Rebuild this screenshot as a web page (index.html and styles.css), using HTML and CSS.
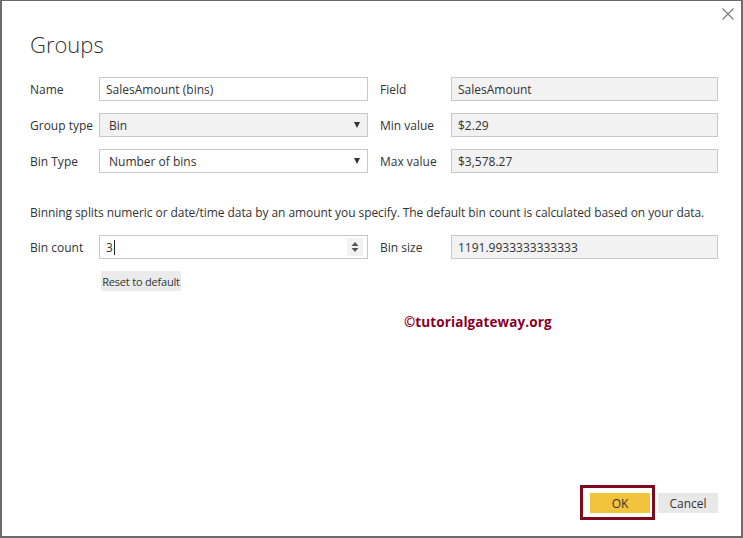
FILE: index.html
```html
<!DOCTYPE html>
<html>
<head>
<meta charset="utf-8">
<link rel="stylesheet" href="styles.css">
</head>
<body>
<div class="dialog">
  <div class="close" aria-label="Close">
    <svg width="12" height="12" viewBox="0 0 12 12"><path d="M0.5 0.5 L11.5 11.5 M11.5 0.5 L0.5 11.5" stroke="#777" stroke-width="1.1" fill="none"/></svg>
  </div>
  <h1 class="title">Groups</h1>
  <div class="grid">
    <label class="lbl">Name</label>
    <div class="box">SalesAmount (bins)</div>
    <label class="lbl lbl2">Field</label>
    <div class="box ro">SalesAmount</div>

    <label class="lbl">Group type</label>
    <div class="box ro sel">Bin<span class="caret"></span></div>
    <label class="lbl lbl2">Min value</label>
    <div class="box ro">$2.29</div>

    <label class="lbl">Bin Type</label>
    <div class="box sel">Number of bins<span class="caret"></span></div>
    <label class="lbl lbl2">Max value</label>
    <div class="box ro">$3,578.27</div>
  </div>
  <p class="desc">Binning splits numeric or date/time data by an amount you specify. The default bin count is calculated based on your data.</p>
  <div class="grid grid2">
    <label class="lbl">Bin count</label>
    <div class="box spin"><span>3</span><span class="cursor"></span><span class="spinner"><svg width="8" height="12" viewBox="0 0 8 12"><path d="M4 1 L7.5 5 L0.5 5 Z M4 11 L7.5 7 L0.5 7 Z" fill="#555"/></svg></span></div>
    <label class="lbl lbl2">Bin size</label>
    <div class="box ro">1191.9933333333333</div>
  </div>
  <div class="resetrow"><button class="reset">Reset to default</button></div>
  <div class="watermark">©tutorialgateway.org</div>
  <div class="footer">
    <div class="okwrap"><button class="ok">OK</button></div>
    <button class="cancel">Cancel</button>
  </div>
</div>
</body>
</html>
```
FILE: styles.css
```css
html, body {
  margin: 0;
  padding: 0;
  background: #ffffff;
}
.dialog {
  position: relative;
  box-sizing: border-box;
  width: 743px;
  height: 538px;
  border-top: 1px solid #6b6b6b;
  border-left: 2px solid #6b6b6b;
  border-right: 2px solid #6b6b6b;
  border-bottom: 2px solid #6b6b6b;
  background: #fff;
  font-family: "Open Sans", "Noto Sans", sans-serif;
  font-size: 12px;
  color: #333;
  padding: 0 0 0 28px;
  display: flex;
  flex-direction: column;
}
.close {
  position: absolute;
  top: 7px;
  right: 7px;
  width: 12px;
  height: 12px;
  line-height: 0;
}
.title {
  margin: 28px 0 0 0;
  font-weight: 300;
  font-size: 22px;
  line-height: 30px;
  color: #333;
}
.grid {
  display: grid;
  grid-template-columns: 69px 269px 83px 267px;
  row-gap: 12px;
  margin-top: 18px;
}
.lbl {
  display: flex;
  align-items: center;
  height: 24px;
  color: #333;
}
.lbl2 {
  padding-left: 12px;
}
.box {
  box-sizing: border-box;
  height: 24px;
  border: 1px solid #c8c8c8;
  background: #fff;
  padding: 0 6px;
  display: flex;
  align-items: center;
  color: #333;
  position: relative;
}
.box.ro {
  background: #f2f2f2;
}
.sel {
  padding-left: 9px;
}
.caret {
  position: absolute;
  right: 7px;
  top: 8px;
  width: 0;
  height: 0;
  border-left: 3.5px solid transparent;
  border-right: 3.5px solid transparent;
  border-top: 6px solid #333;
}
.desc {
  margin: 32px 0 0 0;
  line-height: 16px;
  color: #333;
  letter-spacing: -0.07px;
}
.grid2 {
  margin-top: 14px;
}
.cursor {
  display: inline-block;
  width: 1px;
  height: 15px;
  background: #222;
  margin-left: 1px;
}
.spinner {
  position: absolute;
  right: 4px;
  top: 2px;
  width: 16px;
  height: 18px;
  background: #f2f2f2;
  display: flex;
  align-items: center;
  justify-content: center;
}
.resetrow {
  padding-left: 71px;
  margin-top: 12px;
}
.reset {
  font-family: inherit;
  font-size: 11px;
  color: #333;
  background: #ebebeb;
  border: none;
  height: 20px;
  width: 80px;
  padding: 0;
  letter-spacing: -0.2px;
}
.watermark {
  margin: 22px 0 0 374px;
  font-weight: 700;
  font-size: 13.5px;
  color: #8b0025;
  letter-spacing: 0.1px;
}
.footer {
  margin-top: auto;
  margin-bottom: 16px;
  display: flex;
  justify-content: flex-end;
  align-items: flex-end;
  padding-right: 23px;
  gap: 3px;
}
.okwrap {
  border: 3px solid #7d0a1e;
  padding: 5px 2px 4px 7px;
  line-height: 0;
}
.ok, .cancel {
  font-family: inherit;
  font-size: 12px;
  border: none;
  height: 20px;
  width: 60px;
  padding: 0;
  color: #333;
}
.ok {
  background: #f2c33c;
}
.cancel {
  background: #e8e8e8;
  margin-bottom: 7px;
}
```
